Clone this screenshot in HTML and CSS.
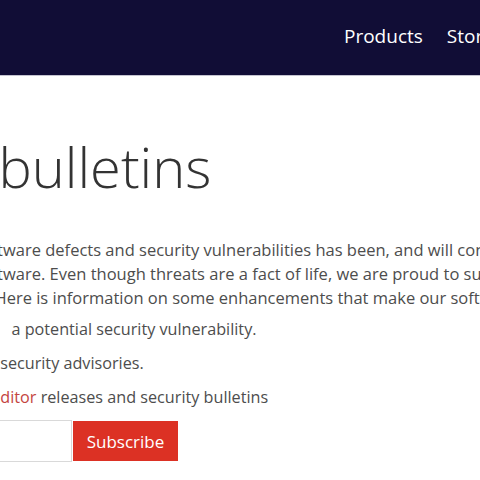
FILE: index.html
```html
<!DOCTYPE html>
<html lang="en">
<head>
<meta charset="utf-8">
<title>Security bulletins</title>
<link rel="stylesheet" href="styles.css">
</head>
<body>
<header class="site-header">
  <nav class="main-nav">
    <a class="nav-link" href="#">Products</a>
    <a class="nav-link" href="#">Store</a>
    <a class="nav-link" href="#">Download</a>
    <a class="nav-link" href="#">Support</a>
  </nav>
</header>
<main class="content">
  <h1 class="page-title">Security bulletins</h1>
  <p class="intro">
    <span class="line">of software defects and security vulnerabilities has been, and will continue to be, a top priority for us</span>
    <span class="line">of software. Even though threats are a fact of life, we are proud to support our users and keep them</span>
    <span class="line">safe. Here is information on some enhancements that make our software more secure.</span>
  </p>
  <ul class="links">
    <li><span class="lead">Flag</span> a potential security vulnerability.</li>
    <li>Read security advisories.</li>
    <li>Our <a class="red-link" href="#">Editor</a> releases and security bulletins</li>
  </ul>
  <form class="subscribe">
    <input class="email" type="email" aria-label="Email address">
    <button class="btn" type="button">Subscribe</button>
  </form>
</main>
</body>
</html>
```
FILE: styles.css
```css
html, body {
  margin: 0;
  padding: 0;
  overflow: hidden;
  background: #ffffff;
}
body {
  font-family: "Open Sans", "Liberation Sans", sans-serif;
  color: #4d4d4d;
}
.site-header {
  height: 76px;
  box-sizing: border-box;
  padding: 0 0 4px 344px;
  background: #110d36;
  border-bottom: 1px solid #c4c3d0;
  display: flex;
  align-items: center;
  white-space: nowrap;
}
.main-nav {
  display: flex;
  gap: 24px;
}
.nav-link {
  color: #ffffff;
  text-decoration: none;
  font-size: 19px;
}
.content {
  margin-left: -42px;
  white-space: nowrap;
}
.page-title {
  margin: 55px 0 0 -174px;
  font-size: 56px;
  font-weight: 300;
  line-height: 70px;
  color: #333333;
}
.intro {
  margin: 37px 0 0 -4px;
  font-size: 16.5px;
  line-height: 24px;
}
.line {
  display: block;
}
.links {
  list-style: none;
  margin: 7px 0 0;
  padding: 0;
  display: flex;
  flex-direction: column;
  gap: 10px;
  font-size: 16.2px;
  line-height: 24px;
}
.lead {
  margin-right: 19px;
}
.red-link {
  color: #c4453f;
  text-decoration: none;
}
.subscribe {
  display: flex;
  align-items: center;
  gap: 1px;
  margin-top: 11px;
}
.email {
  width: 114px;
  height: 42px;
  box-sizing: border-box;
  border: 1px solid #d9d9d9;
  margin: 0;
}
.btn {
  height: 40px;
  width: 105px;
  padding: 0;
  border: none;
  background: #dc3124;
  color: #ffffff;
  font-family: "Open Sans", "Liberation Sans", sans-serif;
  font-size: 17px;
}
```
